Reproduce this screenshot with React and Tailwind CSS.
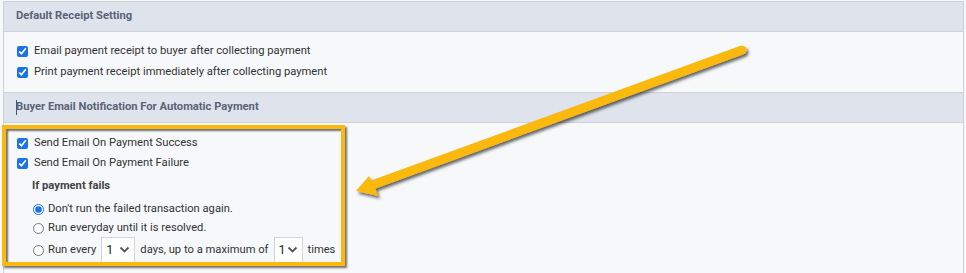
import React from "react";

function Check({ label }) {
  return (
    <label className="flex items-center h-full">
      <input type="checkbox" defaultChecked className="w-[11px] h-[11px] m-0 ml-[16px] mr-[6px] accent-[#1a73e8]" />
      <span>{label}</span>
    </label>
  );
}

function Radio({ checked, children }) {
  return (
    <label className="flex items-center h-full">
      <input type="radio" name="fail" defaultChecked={checked} className="w-[11px] h-[11px] m-0 ml-[32px] mr-[4px] accent-[#1a73e8]" />
      {children}
    </label>
  );
}

function Dropdown({ value, w }) {
  return (
    <div className={`flex items-center justify-between h-[26px] ${w} bg-white border border-[#d4d4d4] px-[4px] mx-[5px]`}>
      <span className="text-[12.5px] text-[#222]">{value}</span>
      <svg width="11" height="8" viewBox="0 0 11 8">
        <path d="M1.5 1.5 L5.5 5.5 L9.5 1.5" fill="none" stroke="#555" strokeWidth="1.8" />
      </svg>
    </div>
  );
}

export default function App() {
  return (
    <div className="relative w-[966px] h-[273px] overflow-hidden bg-[#f7f8fa] pl-[3px] pt-px pr-[2px] text-[11.2px] text-[#333]" style={{ fontFamily: "Roboto, 'Liberation Sans', sans-serif" }}>
      <div className="h-full border-t border-l border-r border-[#ccd0d8] flex flex-col">
        <div className="h-[30px] shrink-0 bg-[#dee3ec] border-b border-[#ccd0d8] flex items-center pl-[12px] font-bold text-[#5b6378]">
          Default Receipt Setting
        </div>
        <div className="h-[61px] shrink-0 bg-[#f7f8fa] border-b border-[#ccd0d8] pt-[9px]">
          <div className="h-[21px] -ml-[3px]"><Check label="Email payment receipt to buyer after collecting payment" /></div>
          <div className="h-[21px] -ml-[3px]"><Check label="Print payment receipt immediately after collecting payment" /></div>
        </div>
        <div className="h-[30px] shrink-0 bg-[#dee3ec] border-b border-[#ccd0d8] flex items-center pl-[12px] font-bold text-[#5b6378]">
          <span className="inline-block w-px h-[15px] bg-[#4a5570] mr-[-1px]"></span>
          Buyer Email Notification For Automatic Payment
        </div>
        <div className="flex-1 bg-[#f7f8fa] pt-[10px]">
          <div className="h-[20px] -ml-[3px]"><Check label="Send Email On Payment Success" /></div>
          <div className="h-[20px] -ml-[3px]"><Check label="Send Email On Payment Failure" /></div>
          <div className="h-[26px] flex items-center pl-[28px] font-bold text-[#444]">If payment fails</div>
          <div className="h-[20px] -ml-[3px]"><Radio checked><span>Don't run the failed transaction again.</span></Radio></div>
          <div className="h-[18px] -ml-[3px]"><Radio><span>Run everyday until it is resolved.</span></Radio></div>
          <div className="h-[26px] -ml-[3px]">
            <Radio>
              <span>Run every</span>
              <Dropdown value="1" w="w-[34px]" />
              <span>days, up to a maximum of</span>
              <Dropdown value="1" w="w-[29px]" />
              <span>times</span>
            </Radio>
          </div>
        </div>
      </div>

      <div className="absolute left-[2px] top-[125px] w-[343px] h-[141px] border-[4px] border-[#fbb80f] shadow-[2px_2px_2px_rgba(0,0,0,0.55),inset_2px_2px_2px_rgba(0,0,0,0.55)] pointer-events-none"></div>

      <svg className="absolute left-0 top-0 pointer-events-none" width="966" height="273" viewBox="0 0 966 273">
        <defs>
          <filter id="sh" x="-10%" y="-10%" width="120%" height="130%">
            <feDropShadow dx="2" dy="2.5" stdDeviation="1.5" floodColor="#000" floodOpacity="0.6" />
          </filter>
        </defs>
        <g filter="url(#sh)">
          <line x1="742" y1="50" x2="372" y2="185" stroke="#fbb80f" strokeWidth="9" strokeLinecap="round" />
          <polygon points="356,191 369,176 374,185 378,196" fill="#fbb80f" />
        </g>
      </svg>
    </div>
  );
}
